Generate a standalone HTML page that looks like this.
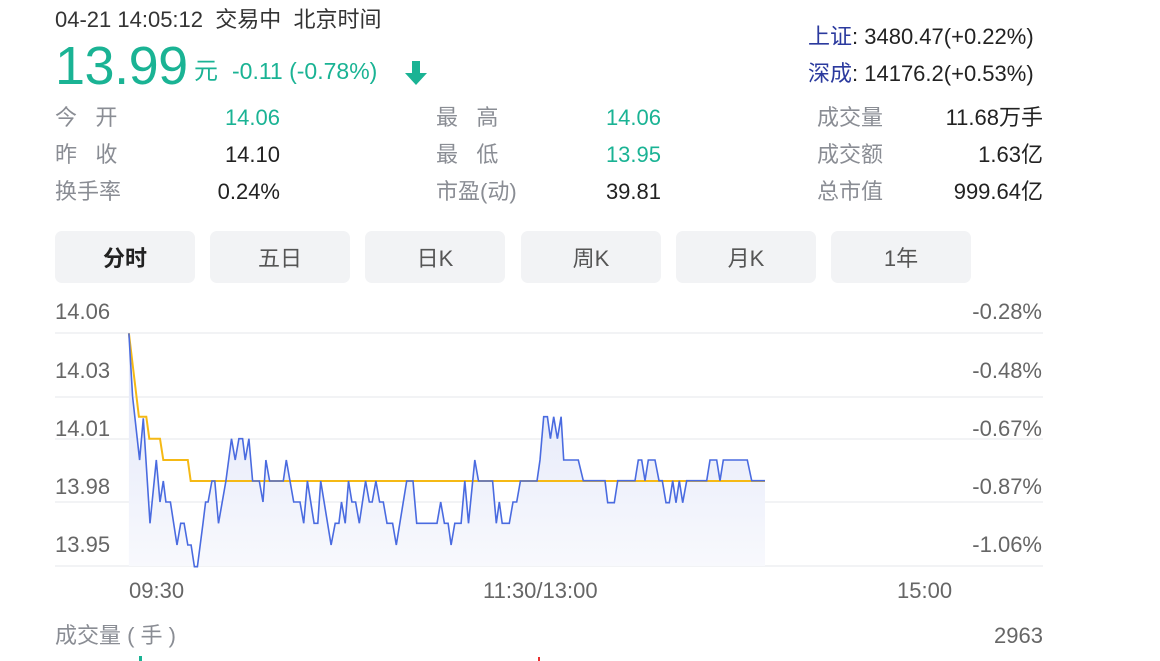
<!DOCTYPE html>
<html><head><meta charset="utf-8">
<style>
*{margin:0;padding:0;box-sizing:border-box}
body{width:1160px;height:661px;background:#fff;font-family:"Liberation Sans","Noto Sans CJK SC",sans-serif;position:relative;overflow:hidden;color:#222}
.a{position:absolute;white-space:nowrap;line-height:25px}
.g{color:#1ab394}
.lb{color:#8a8d94;font-size:22px}
.v{font-size:22px;text-align:right}
.tab{position:absolute;top:231px;height:52px;width:140px;background:#f2f3f5;border-radius:7px;font-size:22px;color:#555;text-align:center;line-height:56px}
.ax{font-size:22px;color:#666}
</style></head><body>
<div class="a" style="left:55px;top:7px;font-size:22px;color:#333">04-21 14:05:12&nbsp; 交易中&nbsp; 北京时间</div>
<div class="a g" style="left:55px;top:38px;font-size:54px;line-height:56px;letter-spacing:-0.5px">13.99</div>
<div class="a g" style="left:194px;top:59px;font-size:24px">元</div>
<div class="a g" style="left:232px;top:59px;font-size:23px">-0.11 (-0.78%)</div>
<svg class="a" style="left:402px;top:59px" width="28" height="28" viewBox="0 0 28 28"><path d="M10 2h8v12h7L14 26 3 14h7z" fill="#1ab394"/></svg>

<div class="a lb" style="left:55px;top:105px">今&nbsp;&nbsp;&nbsp;开</div>
<div class="a v g" style="left:160px;width:120px;top:105px">14.06</div>
<div class="a lb" style="left:55px;top:142px">昨&nbsp;&nbsp;&nbsp;收</div>
<div class="a v" style="left:160px;width:120px;top:142px">14.10</div>
<div class="a lb" style="left:55px;top:179px">换手率</div>
<div class="a v" style="left:160px;width:120px;top:179px">0.24%</div>

<div class="a lb" style="left:436px;top:105px">最&nbsp;&nbsp;&nbsp;高</div>
<div class="a v g" style="left:541px;width:120px;top:105px">14.06</div>
<div class="a lb" style="left:436px;top:142px">最&nbsp;&nbsp;&nbsp;低</div>
<div class="a v g" style="left:541px;width:120px;top:142px">13.95</div>
<div class="a lb" style="left:436px;top:179px">市盈(动)</div>
<div class="a v" style="left:541px;width:120px;top:179px">39.81</div>

<div class="a" style="left:808px;top:24px;font-size:22px"><span style="color:#2b3a9e">上证</span>: 3480.47(+0.22%)</div>
<div class="a" style="left:808px;top:61px;font-size:22px"><span style="color:#2b3a9e">深成</span>: 14176.2(+0.53%)</div>
<div class="a lb" style="left:817px;top:105px">成交量</div>
<div class="a v" style="left:893px;width:150px;top:105px">11.68万手</div>
<div class="a lb" style="left:817px;top:142px">成交额</div>
<div class="a v" style="left:893px;width:150px;top:142px">1.63亿</div>
<div class="a lb" style="left:817px;top:179px">总市值</div>
<div class="a v" style="left:893px;width:150px;top:179px">999.64亿</div>

<div class="tab" style="left:55px;color:#222;font-weight:bold">分时</div>
<div class="tab" style="left:210px">五日</div>
<div class="tab" style="left:365px">日K</div>
<div class="tab" style="left:521px">周K</div>
<div class="tab" style="left:676px">月K</div>
<div class="tab" style="left:831px">1年</div>

<div class="a ax" style="left:55px;top:299px">14.06</div>
<div class="a ax" style="left:55px;top:358px">14.03</div>
<div class="a ax" style="left:55px;top:416px">14.01</div>
<div class="a ax" style="left:55px;top:474px">13.98</div>
<div class="a ax" style="left:55px;top:532px">13.95</div>
<div class="a ax" style="left:923px;width:119px;text-align:right;top:299px">-0.28%</div>
<div class="a ax" style="left:923px;width:119px;text-align:right;top:358px">-0.48%</div>
<div class="a ax" style="left:923px;width:119px;text-align:right;top:416px">-0.67%</div>
<div class="a ax" style="left:923px;width:119px;text-align:right;top:474px">-0.87%</div>
<div class="a ax" style="left:923px;width:119px;text-align:right;top:532px">-1.06%</div>

<svg class="a" style="left:0;top:0" width="1160" height="661" id="ch">
<defs><linearGradient id="gr" x1="0" y1="0" x2="0" y2="1"><stop offset="0" stop-color="#dfe4f8"/><stop offset="1" stop-color="#f8f9fd"/></linearGradient></defs>
<g stroke="#eeeff2" stroke-width="1.5">
<line x1="55" y1="333" x2="1043" y2="333"/><line x1="55" y1="397" x2="1043" y2="397"/><line x1="55" y1="439" x2="1043" y2="439"/><line x1="55" y1="502" x2="1043" y2="502"/><line x1="55" y1="566" x2="1043" y2="566"/>
</g>
<path id="fill" fill="url(#gr)"/>
<path id="avg" fill="none" stroke="#f5b915" stroke-width="2"/>
<path id="pr" fill="none" stroke="#4a6be0" stroke-width="1.6"/>
</svg>

<div class="a ax" style="left:129px;top:578px">09:30</div>
<div class="a ax" style="left:483px;top:578px">11:30/13:00</div>
<div class="a ax" style="left:897px;top:578px">15:00</div>
<div class="a ax" style="left:55px;top:623px;color:#8a8d94">成交量 ( 手 )</div>
<div class="a ax" style="left:923px;width:120px;text-align:right;top:623px">2963</div>
<div class="a" style="left:139px;top:656px;width:3px;height:5px;background:#1ab394"></div>
<div class="a" style="left:538px;top:657px;width:2px;height:4px;background:#e93030"></div>

<script>
var z2=[348,130,358,320,377,510,387,385,405,700,422,510,432,636,441,573,448,636,460,636,478,765,488,700,497,700,507,765,516,765,525,830,533,830,548,700,555,636,562,636,572,573,580,573,590,700,610,573,625,446,635,510,645,446,655,446,662,510,672,446,682,573,700,573,710,636,718,510,728,573,765,573,773,510,783,573,793,636,810,636,820,700,830,573,848,700,858,700,866,573,894,765,905,700,915,700,922,636,932,700,941,573,950,636,960,636,970,700,987,573,997,636,1005,636,1015,573,1025,636,1035,636,1045,700,1060,700,1070,765,1098,573,1115,573,1125,700,1180,700,1190,636,1200,700,1210,700,1218,765,1228,700,1245,700,1255,573,1265,700,1282,510,1292,573,1330,573,1340,700,1348,636,1356,700,1375,700,1385,636,1395,636,1405,573,1450,573,1458,510,1468,380,1478,380,1486,446,1495,380,1505,446,1515,380,1522,510,1532,510];
var z3=[355,210,370,272,435,272,443,338,463,338,473,272,525,272,535,210,545,210,555,272,565,210,585,210,597,272,607,272,618,338,628,338,638,272,648,338,658,272,668,338,680,272,740,272,750,210,770,210,780,272,790,210,862,210,875,272,915,272];
var pts=[];
for(var i=0;i<z2.length;i+=2)pts.push([z2[i]/2.7,290+z2[i+1]/3]);
for(var i=0;i<z3.length;i+=2)pts.push([460+z3[i]/3,390+z3[i+1]/3]);
var d="M"+pts.map(function(p){return p[0].toFixed(1)+" "+p[1].toFixed(1)}).join(" L");
document.getElementById("pr").setAttribute("d",d);
document.getElementById("fill").setAttribute("d",d+" L765 566 L"+pts[0][0].toFixed(1)+" 566 Z");
var ya=[348,130,375,380,395,380,403,446,432,446,441,510,507,510,515,573];
var ap=[];for(var i=0;i<ya.length;i+=2)ap.push([ya[i]/2.7,290+ya[i+1]/3]);ap.push([765,481]);
document.getElementById("avg").setAttribute("d","M"+ap.map(function(p){return p[0].toFixed(1)+" "+p[1].toFixed(1)}).join(" L"));
</script>
</body></html>
